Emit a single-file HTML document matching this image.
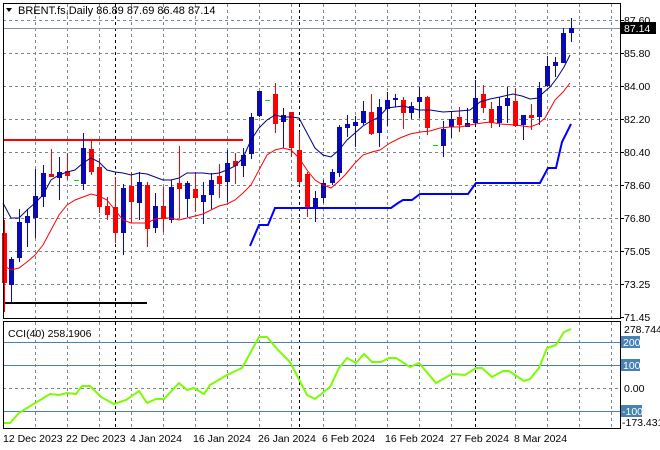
<!DOCTYPE html>
<html><head><meta charset="utf-8"><style>
html,body{margin:0;padding:0;background:#fff;width:660px;height:450px;overflow:hidden}
svg{display:block;font-family:"Liberation Sans",sans-serif}
</style></head><body>
<svg id="s" width="660" height="450" xmlns="http://www.w3.org/2000/svg">
<rect x="0" y="0" width="660" height="450" fill="#fff"/>
<g id="grid" stroke="#7a8896" stroke-width="1" stroke-dasharray="3,3" fill="none"></g>
<g id="sep" stroke="#000" stroke-width="1" stroke-dasharray="3,3"></g>
<line x1="3" y1="28.5" x2="620" y2="28.5" stroke="#8896a4" stroke-width="1"/>
<line x1="3" y1="140" x2="243" y2="140" stroke="#f00" stroke-width="2"/>
<line x1="3" y1="303" x2="147" y2="303" stroke="#000" stroke-width="2"/>
<g id="candles"></g>
<polyline id="ma1" fill="none" stroke="#000080" stroke-width="1"/>
<polyline id="ma2" fill="none" stroke="#f00" stroke-width="1"/>
<polyline fill="none" stroke="#0000ff" stroke-width="2" points="250,246 259,225 268,225 275,208 391,208 398,203 403,200 412,200 420,194 468,194 476,183 540,183 548,168 556,168 562,142 571,124"/>
<!-- frame main -->
<line x1="3.5" y1="3" x2="3.5" y2="318" stroke="#000"/>
<line x1="3" y1="3.5" x2="621" y2="3.5" stroke="#000"/>
<line x1="620.5" y1="3" x2="620.5" y2="318" stroke="#000"/>
<line x1="3" y1="318.5" x2="621" y2="318.5" stroke="#000"/>
<!-- title -->
<polygon points="6,8 12,8 9,12" fill="#000"/>
<text x="18" y="14" font-size="11" fill="#000">BRENT.fs,Daily  86.89 87.69 86.48 87.14</text>
<!-- price labels -->
<g id="plab" font-size="10.5" fill="#000"></g>
<rect x="621" y="22" width="35" height="12" fill="#000"/>
<text x="624" y="32" font-size="10.5" fill="#fff">87.14</text>
<!-- CCI panel -->
<line x1="3" y1="342.5" x2="620" y2="342.5" stroke="#4682b4"/>
<line x1="3" y1="365.5" x2="620" y2="365.5" stroke="#4682b4"/>
<line x1="3" y1="411.5" x2="620" y2="411.5" stroke="#4682b4"/>
<line x1="3" y1="388.5" x2="620" y2="388.5" stroke="#7a8896" stroke-dasharray="3,3"/>
<polyline fill="none" stroke="#7cfc00" stroke-width="2" points="3,423 10,423 19,413 27,408 50,394 59,395 67,393 76,394 82,386 90,386 101,397 114,404 126,400 139,391 147,403 156,399 164,399 179,383 187,390 194,388 204,394 210,385 227,375 242,368 259,337 267,337 278,350 290,362 307,395 315,399 330,387 339,368 347,358 356,363 364,354 372,362 381,362 389,358 396,358 410,367 419,363 436,383 452,374 465,375 476,368 482,368 492,377 503,371 509,371 524,381 530,379 539,368 547,348 556,345 564,332 571,329"/>
<rect x="3.5" y="321.5" width="617" height="107" fill="none" stroke="#000"/>
<text x="8" y="337" font-size="10.5" fill="#000">CCI(40) 258.1906</text>
<text x="624" y="333" font-size="10.5" fill="#000">278.744</text>
<rect x="621" y="336" width="19" height="12" fill="#4682b4"/><text x="623" y="346" font-size="10.5" fill="#fff">200</text>
<rect x="621" y="359" width="19" height="12" fill="#4682b4"/><text x="623" y="369" font-size="10.5" fill="#fff">100</text>
<text x="624" y="392" font-size="10.5" fill="#000">0.00</text>
<rect x="621" y="405" width="21" height="12" fill="#4682b4"/><text x="622" y="415" font-size="10.5" fill="#fff">-100</text>
<text x="622" y="426" font-size="10.5" fill="#000">-173.431</text>
<!-- dates -->
<g font-size="10.5" fill="#000">
<text x="3" y="442">12 Dec 2023</text>
<text x="66" y="442">22 Dec 2023</text>
<text x="130" y="442">4 Jan 2024</text>
<text x="193" y="442">16 Jan 2024</text>
<text x="258" y="442">26 Jan 2024</text>
<text x="322" y="442">6 Feb 2024</text>
<text x="385" y="442">16 Feb 2024</text>
<text x="450" y="442">27 Feb 2024</text>
<text x="514" y="442">8 Mar 2024</text>
</g>
</svg>
<script>
var NS="http://www.w3.org/2000/svg";
function el(p,t,a){var e=document.createElementNS(NS,t);for(var k in a)e.setAttribute(k,a[k]);document.getElementById(p).appendChild(e);return e;}
var gy=[20,53,86,119,152,185,218,251,284,317];
gy.forEach(function(y){if(y!=317)el("grid","line",{x1:3,y1:y+.5,x2:620,y2:y+.5});});
var gx=[];for(var x=35;x<=611;x+=32){if(x!=483)gx.push(x);}
gx.forEach(function(x){el("grid","line",{x1:x+.5,y1:4,x2:x+.5,y2:318});el("grid","line",{x1:x+.5,y1:322,x2:x+.5,y2:428});});
[115,299,475].forEach(function(x){el("sep","line",{x1:x+.5,y1:4,x2:x+.5,y2:318});el("sep","line",{x1:x+.5,y1:322,x2:x+.5,y2:428});});
var pl=["87.60","85.80","84.00","82.20","80.40","78.60","76.80","75.05","73.25","71.45"];
gy.forEach(function(y,i){el("plab","line",{x1:620,y1:y+.5,x2:624,y2:y+.5,stroke:"#000"});if(i>0){var t=el("plab","text",{x:624,y:y+4});t.textContent=pl[i];}else{var t=el("plab","text",{x:624,y:y+4});t.textContent=pl[i];}});
// x, high, low, bodyTop, bodyBot, color
var C=[[4,220,312,233,283,"r"],[11,257,302,259,285,"b"],[19,209,262,222,258,"b"],[27,209,247,216,223,"b"],[35,169,238,196,218,"b"],[43,165,207,173,197,"b"],[51,149,177,174,177,"r"],[59,157,200,172,178,"b"],[67,153,180,171,176,"r"],[76,180,180,180,180,"g"],[83,133,190,148,184,"b"],[91,140,175,149,172,"r"],[99,158,213,167,207,"r"],[107,197,220,206,215,"r"],[115,177,243,207,233,"r"],[123,184,255,188,233,"b"],[131,172,223,186,202,"r"],[139,172,220,182,203,"b"],[147,182,247,185,229,"r"],[155,193,233,206,228,"b"],[163,187,232,206,219,"r"],[171,180,223,187,220,"b"],[179,146,218,183,189,"r"],[187,181,217,183,199,"b"],[195,172,212,189,198,"r"],[203,182,224,195,202,"b"],[211,173,209,180,195,"b"],[219,164,198,176,184,"r"],[227,150,202,163,182,"b"],[235,153,184,161,166,"r"],[243,148,177,155,166,"b"],[251,113,159,117,154,"b"],[259,91,117,91,116,"b"],[267,100,100,100,100,"g"],[275,83,133,94,124,"r"],[283,108,148,115,122,"b"],[291,112,157,112,148,"r"],[299,132,185,150,182,"r"],[307,172,217,174,208,"r"],[315,191,222,198,208,"b"],[323,180,203,183,198,"b"],[332,169,185,172,183,"b"],[339,125,177,127,173,"b"],[347,115,137,124,128,"b"],[355,116,147,122,126,"b"],[363,101,125,111,123,"b"],[371,94,135,112,134,"r"],[379,99,147,107,133,"b"],[387,92,126,100,109,"b"],[395,94,107,98,100,"b"],[403,97,129,100,113,"r"],[411,102,119,106,113,"b"],[419,87,118,97,102,"b"],[427,96,135,97,128,"r"],[435,145,145,145,145,"g"],[443,121,157,129,146,"b"],[451,112,138,119,127,"b"],[459,107,132,117,125,"r"],[467,108,127,123,127,"b"],[475,80,124,98,123,"b"],[483,85,113,94,108,"r"],[491,102,128,109,123,"r"],[499,97,127,106,123,"b"],[507,87,123,98,106,"b"],[515,88,127,101,126,"r"],[523,115,140,115,125,"b"],[531,104,130,115,118,"r"],[539,82,125,88,117,"b"],[547,56,87,66,86,"b"],[555,57,77,62,66,"b"],[563,28,63,33,63,"b"],[571,18,42,28,33,"b"]];
C.forEach(function(c){var x=c[0];
 if(c[5]=="g"){el("candles","line",{x1:x-2,y1:c[1]+.5,x2:x+3,y2:c[1]+.5,stroke:"#00e000"});return;}
 var wc=c[5]=="r"?"#f00":"#0000ff", bc=c[5]=="r"?"#f00":"#0a0ab4";
 el("candles","line",{x1:x+.5,y1:c[1],x2:x+.5,y2:c[2],stroke:wc});
 el("candles","rect",{x:x-2,y:c[3],width:5,height:Math.max(2,c[4]-c[3]),fill:bc});
});
document.getElementById("ma1").setAttribute("points","3,203 11,218 19,218 27,210 35,203 43,195 51,180 59,175 67,172 75,170 83,163 91,158 99,162 107,170 115,172 123,173 131,175 139,173 147,174 155,177 163,180 171,180 179,178 187,173 195,173 203,173 211,174 219,173 227,170 235,166 243,158 251,140 259,128 267,120 275,115 283,117 291,117 299,118 307,133 315,148 323,155 331,157 339,150 347,140 355,133 363,126 371,121 379,117 387,108 395,107 403,106 411,108 419,110 430,110 443,112 459,111 470,110 480,102 490,99 500,97 513,94 522,96 530,99 538,98 543,93 550,87 557,78 564,67 570,55");
document.getElementById("ma2").setAttribute("points","3,265 11,270 19,268 27,262 35,255 43,245 51,230 59,215 67,205 75,200 83,197 91,194 99,196 107,200 115,210 123,220 131,223 139,223 147,223 155,219 163,218 171,218 179,220 187,218 195,216 203,214 211,210 219,206 227,204 235,200 243,193 251,185 259,170 267,155 275,150 283,148 291,150 299,158 307,170 315,180 323,185 331,188 338,182 345,175 355,163 363,155 372,152 380,150 390,143 400,138 410,134 420,132 430,131 440,128 450,127 460,127 475,124 490,122 500,124 515,125 530,127 538,124 545,118 555,100 563,92 570,83");
</script>
</body></html>
